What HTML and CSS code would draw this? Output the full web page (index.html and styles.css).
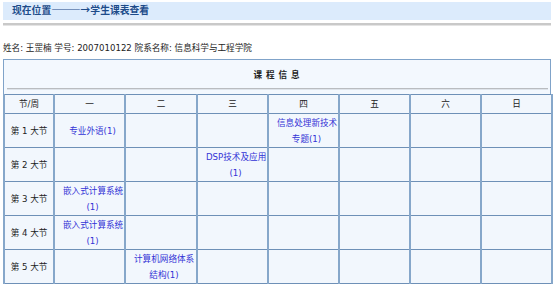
FILE: index.html
```html
<!DOCTYPE html>
<html lang="zh-CN">
<head>
<meta charset="utf-8">
<title>学生课表查看</title>
<link rel="stylesheet" href="styles.css">
</head>
<body>
<div class="location">现在位置———→学生课表查看</div>
<div class="rule"></div>
<p class="info">姓名: 王罡楠 学号: 2007010122 院系名称: 信息科学与工程学院</p>
<div class="box">
  <div class="caption">课 程 信 息</div>
  <div class="hr"></div>
</div>
<table class="grid">
  <colgroup>
    <col class="c0"><col class="cd"><col class="cd2"><col class="cd"><col class="cd"><col class="cd"><col class="cd"><col class="cd">
  </colgroup>
  <tr class="head">
    <th>节/周</th><th>一</th><th>二</th><th>三</th><th>四</th><th>五</th><th>六</th><th>日</th>
  </tr>
  <tr>
    <th>第 1 大节</th>
    <td class="course">专业外语(1)</td><td></td><td></td>
    <td class="course">信息处理新技术<br>专题(1)</td><td></td><td></td><td></td>
  </tr>
  <tr>
    <th>第 2 大节</th>
    <td></td><td></td>
    <td class="course">DSP技术及应用<br>(1)</td><td></td><td></td><td></td><td></td>
  </tr>
  <tr>
    <th>第 3 大节</th>
    <td class="course">嵌入式计算系统<br>(1)</td><td></td><td></td><td></td><td></td><td></td><td></td>
  </tr>
  <tr>
    <th>第 4 大节</th>
    <td class="course">嵌入式计算系统<br>(1)</td><td></td><td></td><td></td><td></td><td></td><td></td>
  </tr>
  <tr>
    <th>第 5 大节</th>
    <td></td>
    <td class="course">计算机网络体系<br>结构(1)</td><td></td><td></td><td></td><td></td><td></td>
  </tr>
</table>
</body>
</html>
```

FILE: styles.css
```css
html, body {
  margin: 0;
  padding: 0;
  background: #ffffff;
}
body {
  padding: 2px 2px 0 3px;
  font-family: "DejaVu Sans", "Noto Sans CJK SC", sans-serif;
  font-size: 8.6px;
  color: #222;
  overflow: hidden;
}
.location {
  width: 539px;
  height: 18px;
  padding-left: 9px;
  background: #dcebfc;
  font-family: "Noto Sans CJK SC", sans-serif;
  font-weight: bold;
  font-size: 9.8px;
  line-height: 17px;
  color: #1d4b8a;
}
.rule {
  width: 548px;
  height: 2px;
  margin-top: 3px;
  background: #c9c9c9;
  border-bottom: 1px solid #e4e4e4;
}
.info {
  margin: 16px 0 0 0;
  height: 12px;
  line-height: 12px;
  color: #222;
}
.box {
  margin-top: 5px;
  width: 546px;
  border: 1px solid #80a3c9;
  border-bottom: none;
  background: #f3f8fe;
  padding-bottom: 4px;
}
.caption {
  height: 28px;
  line-height: 28px;
  text-align: center;
  font-family: "Noto Sans CJK SC", sans-serif;
  font-weight: bold;
  font-size: 8.6px;
  letter-spacing: 1px;
  color: #222;
}
.hr {
  margin: 0 2px 0 3px;
  height: 1px;
  background: #b9bcc0;
  border-bottom: 1px solid #dde3ea;
}
.grid {
  border-collapse: collapse;
  table-layout: fixed;
  width: 549px;
  background: #f2f7fd;
}
.c0 { width: 50px; }
.cd { width: 71px; }
.cd2 { width: 72px; }
.grid th,
.grid td {
  border-top: 1px solid #6e90b7;
  border-bottom: 1px solid #6e90b7;
  border-left: 2px solid #86a7ca;
  border-right: 2px solid #86a7ca;
  padding: 0;
  text-align: center;
  vertical-align: middle;
  font-weight: normal;
  color: #222;
  height: 33px;
  line-height: 16px;
  white-space: nowrap;
  overflow: visible;
}
.grid .head th {
  height: 18px;
  line-height: 18px;
}
.grid td.course {
  color: #3333d6;
  padding: 0 2px 0 8px;
  text-align: center;
}
```
